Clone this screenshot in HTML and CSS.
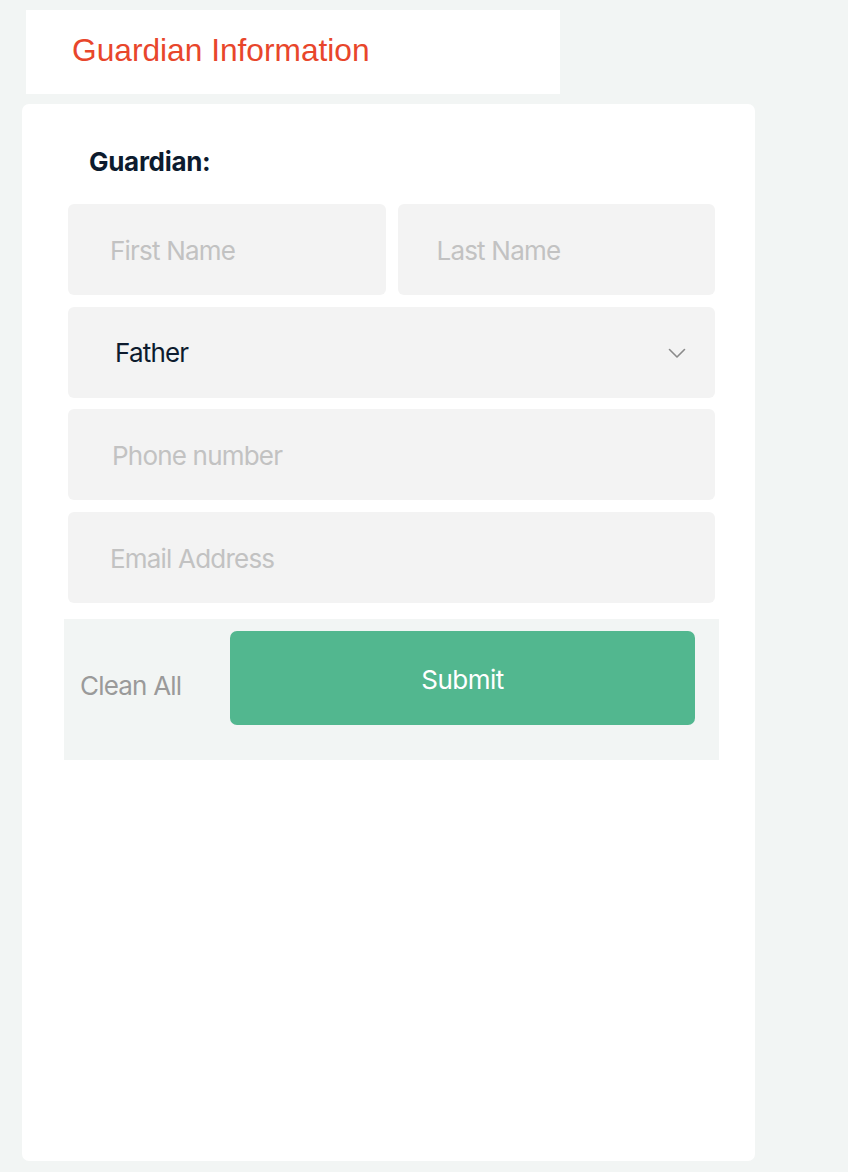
FILE: index.html
```html
<!DOCTYPE html>
<html lang="en">
<head>
<meta charset="utf-8">
<link rel="stylesheet" href="styles.css">
</head>
<body>
<div class="page">
  <div class="header"><h1 class="title">Guardian Information</h1></div>
  <div class="card">
    <div class="label">Guardian:</div>
    <div class="row">
      <div class="field half"><span class="ph ph-first">First Name</span></div>
      <div class="field half"><span class="ph ph-last">Last Name</span></div>
    </div>
    <div class="field select">
      <span class="value">Father</span>
      <svg class="chev" width="18" height="11" viewBox="0 0 18 11"><path d="M1.5 1.5 L9 9 L16.5 1.5" fill="none" stroke="#8a8a8a" stroke-width="1.6" stroke-linecap="round" stroke-linejoin="round"/></svg>
    </div>
    <div class="field"><span class="ph ph-phone">Phone number</span></div>
    <div class="field"><span class="ph ph-email">Email Address</span></div>
    <div class="actions">
      <span class="clear">Clean All</span>
      <div class="submit">Submit</div>
    </div>
  </div>
</div>
</body>
</html>
```
FILE: styles.css
```css
* { box-sizing: border-box; }
html, body { margin: 0; padding: 0; }
body {
  background: #f2f5f4;
  font-family: Inter, "Liberation Sans", sans-serif;
  width: 848px;
  height: 1172px;
  overflow: hidden;
}
.page {
  padding: 10px 0 0 22px;
}
.header {
  margin-left: 4px;
  width: 534px;
  height: 84px;
  background: #fff;
  display: flex;
  align-items: center;
  padding-left: 46px;
}
.title {
  margin: 0;
  font-family: "Liberation Sans", Arial, sans-serif;
  font-weight: 400;
  font-size: 32px;
  color: #e8462b;
  transform: scaleX(0.99);
  transform-origin: left center;
  margin-top: -3px;
}
.card {
  margin-top: 10px;
  width: 733px;
  height: 1057px;
  background: #fff;
  border-radius: 7px;
  padding: 42px 40px 0 46px;
  display: flex;
  flex-direction: column;
}
.label {
  font-weight: 700;
  font-size: 26px;
  color: #0d1b2e;
  margin-left: 21px;
  height: 32px;
  line-height: 32px;
  letter-spacing: -0.3px;
}
.row {
  display: flex;
  gap: 12px;
  margin-top: 26px;
}
.field {
  height: 91px;
  background: #f3f3f3;
  border-radius: 6px;
  display: flex;
  align-items: center;
  margin-bottom: 12px;
  width: 647px;
}
.row .field { margin-bottom: 0; }
.row + .field { margin-top: 12px; }
.field.half { width: 317.5px; }
.ph {
  font-size: 26px;
  color: #c2c2c2;
  letter-spacing: -0.8px;
  margin-top: 2px;
}
.ph-first { margin-left: 42px; }
.ph-last { margin-left: 39px; }
.ph-phone { margin-left: 44px; }
.ph-email { margin-left: 42px; }
.select {
  justify-content: space-between;
  padding: 0 29px 0 47px;
  margin-bottom: 11px;
}
.value {
  font-size: 26px;
  color: #0d1b2e;
  letter-spacing: -0.8px;
}
.chev { margin-top: 2px; }
.actions {
  margin-top: 4px;
  margin-left: -4px;
  width: 655px;
  height: 141px;
  background: #f2f5f4;
  display: flex;
  align-items: flex-start;
  padding: 12px 24px 0 16px;
}
.clear {
  font-size: 26px;
  color: #9a9a9a;
  letter-spacing: -0.8px;
  margin-top: 39px;
  width: 150px;
}
.submit {
  width: 465px;
  height: 94px;
  background: #52b78f;
  border-radius: 7px;
  color: #fff;
  font-size: 26px;
  letter-spacing: -0.5px;
  display: flex;
  justify-content: center;
  padding-top: 33px;
}
```
